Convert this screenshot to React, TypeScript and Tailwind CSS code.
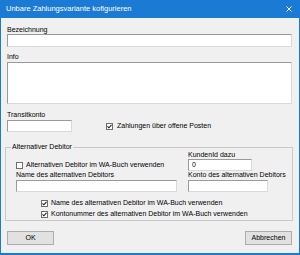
import React from "react";

const Check = ({ checked }: { checked?: boolean }) => (
  <span className="w-[7px] h-[7px] shrink-0 bg-white border border-[#6e6e6e] flex items-center justify-center">
    {checked && (
      <svg width="5" height="5" viewBox="0 0 5 5">
        <path d="M0.5 2.3 L1.9 3.8 L4.5 0.8" fill="none" stroke="#1f1f1f" strokeWidth="1.1" />
      </svg>
    )}
  </span>
);

const Field = ({ className = "", value = "" }: { className?: string; value?: string }) => (
  <div
    className={`bg-white border border-t-[#9a9a9a] border-l-[#9a9a9a] border-b-[#dadada] border-r-[#dadada] pl-[3px] leading-[10px] ${className}`}
  >
    {value}
  </div>
);

const CheckRow = ({ label, checked, className = "" }: { label: string; checked?: boolean; className?: string }) => (
  <div className={`flex items-center gap-[3px] ${className}`}>
    <Check checked={checked} />
    <span className="whitespace-nowrap">{label}</span>
  </div>
);

const App = () => {
  return (
    <div className="w-[300px] h-[255px] bg-[#1a7ad4] px-[1px] pb-[2px] flex flex-col font-['Liberation_Sans',Arial,sans-serif] text-black">
      <div className="h-[18px] shrink-0 flex items-center justify-between pl-[5px] pr-[7px] text-white text-[7.5px]">
        <span>Unbare Zahlungsvariante kofigurieren</span>
        <svg width="6" height="6" viewBox="0 0 6 6">
          <path d="M0.5 0.5 L5.5 5.5 M5.5 0.5 L0.5 5.5" stroke="white" strokeWidth="1" />
        </svg>
      </div>

      <div className="flex-1 bg-[#f0f0f0] pl-[4px] pr-[6px] pt-[8px] text-[7px] leading-[8px] flex flex-col">
        <div className="pl-[2px] pr-[1px] flex flex-col">
          <span>Bezeichnung</span>
          <Field className="h-[13px]" />
          <span className="mt-[6px]">Info</span>
          <Field className="h-[42px] mt-[1px]" />
          <span className="mt-[7px]">Transitkonto</span>
          <div className="flex items-center mt-[1px]">
            <Field className="h-[12px] w-[65px]" />
            <CheckRow className="ml-[34px] gap-[4px]" label="Zahlungen über offene Posten" checked />
          </div>
        </div>

        <fieldset className="mt-[11px] border border-[#c9c9c9] pb-[2px]">
          <legend className="ml-[5px] px-[1px] leading-[8px]">Alternativer Debitor</legend>
          <div className="grid grid-cols-[172px_1fr] pl-[10px]">
            <span />
            <span>KundenId dazu</span>
            <div className="flex items-center">
              <CheckRow label="Alternativen Debitor im WA-Buch verwenden" />
            </div>
            <Field className="h-[12px] w-[64px]" value="0" />
            <span>Name des alternativen Debitors</span>
            <span>Konto des alternativen Debitors</span>
            <Field className="h-[12px] w-[161px] mt-[1px]" />
            <Field className="h-[12px] w-[80px] mt-[1px]" />
          </div>
          <div className="pl-[35px] mt-[7px] flex flex-col gap-[3px]">
            <CheckRow label="Name des alternativen Debitor im WA-Buch verwenden" checked />
            <CheckRow label="Kontonummer des alternativen Debitor im WA-Buch verwenden" checked />
          </div>
        </fieldset>

        <div className="flex justify-between mt-[10px] pl-[2px] pr-[1px]">
          <button className="w-[47px] h-[14px] bg-[#e1e1e1] border border-[#adadad] text-[7px] leading-[12px]">OK</button>
          <button className="w-[47px] h-[14px] bg-[#e1e1e1] border border-[#adadad] text-[7px] leading-[12px]">Abbrechen</button>
        </div>
      </div>
    </div>
  );
};

export default App;
